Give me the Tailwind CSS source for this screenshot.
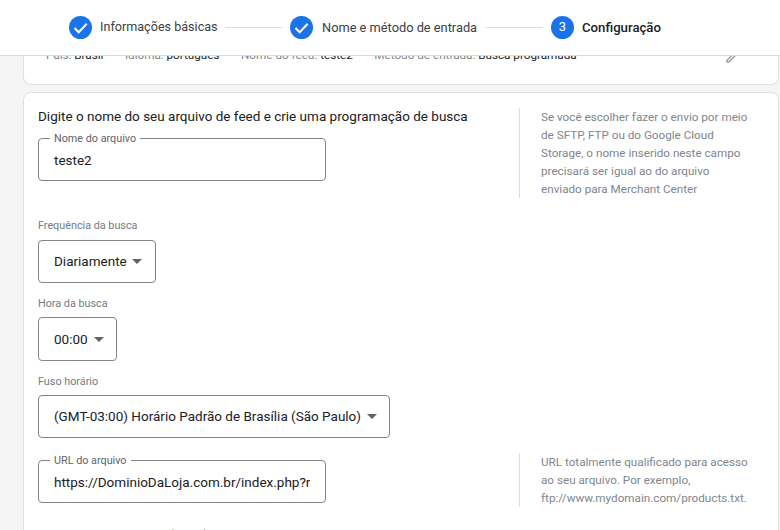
<!DOCTYPE html>
<html lang="pt-BR">
<head>
  <meta charset="UTF-8">
  <title>Configuração do feed</title>
  <script src="https://cdn.jsdelivr.net/npm/@tailwindcss/browser@4"></script>
</head>
<body class="h-[530px] w-[780px] overflow-hidden bg-[#f5f5f5] font-['Roboto',sans-serif] text-[#202124]">

  <!-- Stepper -->
  <header class="relative z-10 flex h-[56px] items-center border-b border-[#dadce0] bg-white pl-[69px]">
    <svg class="h-[23px] w-[23px] shrink-0" viewBox="0 0 23 23"><circle cx="11.5" cy="11.5" r="11.5" fill="#1a73e8"/><path d="M5.5 12l4.2 4.2 8-8.4" fill="none" stroke="#fff" stroke-width="2"/></svg>
    <span class="ml-[8px] w-[117px] whitespace-nowrap text-[12.6px] text-[#3c4043]">Informações básicas</span>
    <div class="mx-[8px] h-px w-[57px] bg-[#dadce0]"></div>
    <svg class="h-[23px] w-[23px] shrink-0" viewBox="0 0 23 23"><circle cx="11.5" cy="11.5" r="11.5" fill="#1a73e8"/><path d="M5.5 12l4.2 4.2 8-8.4" fill="none" stroke="#fff" stroke-width="2"/></svg>
    <span class="ml-[9px] w-[156px] whitespace-nowrap text-[12.8px] text-[#3c4043]">Nome e método de entrada</span>
    <div class="mx-[8px] h-px w-[57px] bg-[#dadce0]"></div>
    <div class="flex h-[23px] w-[23px] shrink-0 items-center justify-center rounded-full bg-[#1a73e8] pb-[2px] text-[13px] text-white">3</div>
    <span class="ml-[8px] text-[13.2px] font-medium text-[#202124]">Configuração</span>
  </header>

  <main class="ml-[23px] mr-px">
    <!-- Summary card, scrolled under the stepper -->
    <section class="-mt-[9px] flex h-[38px] rounded-b-[8px] border border-t-0 border-[#e0e0e0] bg-white pl-[22px] pr-[36px] text-[11.7px] text-[#80868b]">
      <div class="flex h-[18px] gap-[21.5px] whitespace-nowrap">
        <span>País: <span class="text-[#202124]">Brasil</span></span>
        <span>Idioma: <span class="text-[#202124]">português</span></span>
        <span>Nome do feed: <span class="text-[#202124]">teste2</span></span>
        <span>Método de entrada: <span class="text-[#202124]">Busca programada</span></span>
      </div>
      <svg class="ml-auto h-[18px] w-[18px] text-[#9aa0a6]" viewBox="0 0 24 24" fill="currentColor"><path d="M14.06 9.02l.92.92L5.92 19H5v-.92l9.06-9.06M17.66 3c-.25 0-.51.1-.7.29l-1.83 1.83 3.75 3.75 1.83-1.83c.39-.39.39-1.02 0-1.41l-2.34-2.34c-.2-.2-.45-.29-.71-.29zm-3.6 3.19L3 17.25V21h3.75L17.81 9.94l-3.75-3.75z"/></svg>
    </section>

    <!-- Form card -->
    <section class="mt-[7px] h-[600px] rounded-[8px] border border-[#e0e0e0] bg-white pl-[14px] pt-[14px]">
      <div class="flex">
        <div class="w-[481px]">
          <h2 class="whitespace-nowrap text-[13.5px] leading-[18px]">Digite o nome do seu arquivo de feed e crie uma programação de busca</h2>
          <div class="relative mt-[13px] flex h-[43px] w-[288px] items-center rounded-[4px] border border-[#80868b] px-[15px] pt-[2px] text-[13.5px]">
            <span class="absolute -top-[7px] left-[11px] bg-white px-[4px] text-[10.8px] leading-[14px] text-[#5f6368]">Nome do arquivo</span>
            teste2
          </div>
        </div>
        <p class="mt-px h-[90px] whitespace-nowrap border-l border-[#dadce0] pl-[21px] text-[11.7px] leading-[18px] text-[#80868b]">Se você escolher fazer o envio por meio<br>de SFTP, FTP ou do Google Cloud<br>Storage, o nome inserido neste campo<br>precisará ser igual ao do arquivo<br>enviado para Merchant Center</p>
      </div>

      <label class="mt-[21px] block text-[10.8px] leading-[14px] text-[#757a80]">Frequência da busca</label>
      <div class="mt-[7px] flex h-[43px] w-[118px] items-center rounded-[4px] border border-[#80868b] pl-[15px] text-[13.5px]">
        Diariamente
        <span class="ml-[5px] h-0 w-0 border-x-[5px] border-t-[5px] border-x-transparent border-t-[#5f6368]"></span>
      </div>

      <label class="mt-[14px] block text-[10.8px] leading-[14px] text-[#757a80]">Hora da busca</label>
      <div class="mt-[6px] flex h-[44px] w-[79px] items-center rounded-[4px] border border-[#80868b] pl-[15px] text-[13.5px]">
        00:00
        <span class="ml-[6px] h-0 w-0 border-x-[5px] border-t-[5px] border-x-transparent border-t-[#5f6368]"></span>
      </div>

      <label class="mt-[14px] block text-[10.8px] leading-[14px] text-[#757a80]">Fuso horário</label>
      <div class="mt-[6px] flex h-[43px] w-[352px] items-center rounded-[4px] border border-[#80868b] pl-[15px] text-[13.5px]">
        <span class="whitespace-nowrap">(GMT-03:00) Horário Padrão de Brasília (São Paulo)</span>
        <span class="ml-[6px] h-0 w-0 border-x-[5px] border-t-[5px] border-x-transparent border-t-[#5f6368]"></span>
      </div>

      <div class="mt-[22px] flex items-start">
        <div class="relative flex h-[43px] w-[288px] items-center rounded-[4px] border border-[#80868b] px-[15px] pt-[2px] text-[13.5px]">
          <span class="absolute -top-[7px] left-[11px] bg-white px-[4px] text-[10.8px] leading-[14px] text-[#5f6368]">URL do arquivo</span>
          <span class="overflow-hidden whitespace-nowrap">https://DominioDaLoja.com.br/index.php?route=feed</span>
        </div>
        <p class="ml-[193px] -mt-[7px] h-[54px] whitespace-nowrap border-l border-[#dadce0] pl-[21px] text-[11.7px] leading-[18px] text-[#80868b]">URL totalmente qualificado para acesso<br>ao seu arquivo. Por exemplo,<br>ftp://www.mydomain.com/products.txt.</p>
      </div>

      <p class="mt-[21px] text-[10.8px] leading-[14px] text-[#757a80]">Acesso à senha, http, https (opção)</p>
    </section>
  </main>
</body>
</html>
